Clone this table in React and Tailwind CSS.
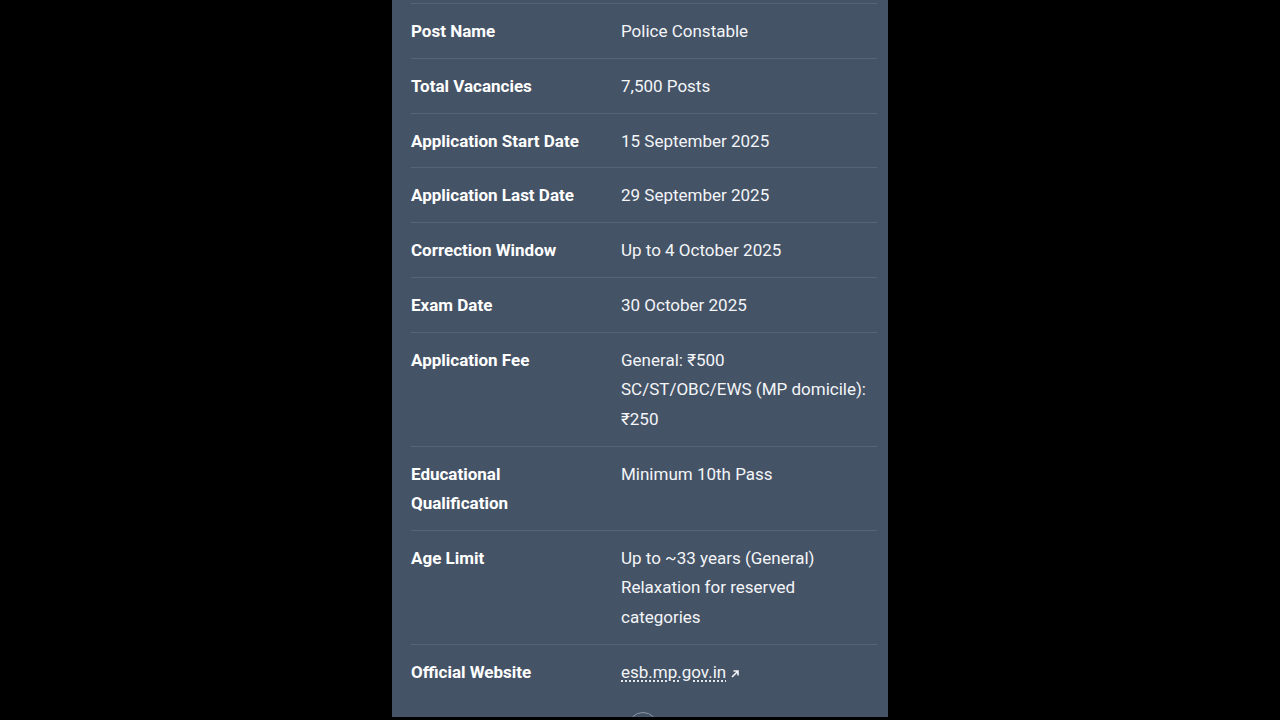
const rows = [
  { label: 'Post Name', value: ['Police Constable'] },
  { label: 'Total Vacancies', value: ['7,500 Posts'] },
  { label: 'Application Start Date', value: ['15 September 2025'] },
  { label: 'Application Last Date', value: ['29 September 2025'] },
  { label: 'Correction Window', value: ['Up to 4 October 2025'] },
  { label: 'Exam Date', value: ['30 October 2025'] },
  { label: 'Application Fee', value: ['General: ₹500', 'SC/ST/OBC/EWS (MP domicile): ₹250'] },
  { label: 'Educational Qualification', value: ['Minimum 10th Pass'] },
  { label: 'Age Limit', value: ['Up to ~33 years (General)', 'Relaxation for reserved categories'] },
]

export default function App() {
  return (
    <div className="h-[720px] w-full bg-black overflow-hidden" style={{ fontFamily: "Roboto, 'Liberation Sans', sans-serif" }}>
      <div className="relative mx-auto h-[717px] w-[496px] overflow-hidden bg-[#455366] pl-[19px] pr-[11px] pt-[3px]">
        <table className="w-full border-collapse text-[17px] leading-[29.5px]">
          <tbody>
            {rows.map((r) => (
              <tr key={r.label} className="border-t border-[#56647a]">
                <td className="w-[210px] pt-[13px] pb-[11.3px] pr-6 align-top font-bold text-white">{r.label}</td>
                <td className="pt-[13px] pb-[11.3px] align-top text-[#f3f5f8]">
                  {r.value.map((v) => (
                    <div key={v}>{v}</div>
                  ))}
                </td>
              </tr>
            ))}
            <tr className="border-t border-[#56647a]">
              <td className="pt-[13px] pb-[11.3px] align-top font-bold text-white">Official Website</td>
              <td className="pt-[13px] pb-[11.3px] align-top text-[#f3f5f8]">
                <span className="underline decoration-dotted decoration-[#e5e7eb] decoration-[1.5px] underline-offset-[3px]">esb.mp.gov.in</span>
                <svg className="ml-[4px] inline-block align-[-1px]" width="10" height="10" viewBox="0 0 10 10" fill="none" stroke="#f3f5f8" strokeWidth="1.6">
                  <path d="M2 8 L8 2 M3.5 2 H8 V6.5" />
                </svg>
              </td>
            </tr>
          </tbody>
        </table>
        <div className="absolute left-[236px] top-[712px] h-[30px] w-[30px] rounded-full border border-[#8a96a6]" />
      </div>
    </div>
  )
}
